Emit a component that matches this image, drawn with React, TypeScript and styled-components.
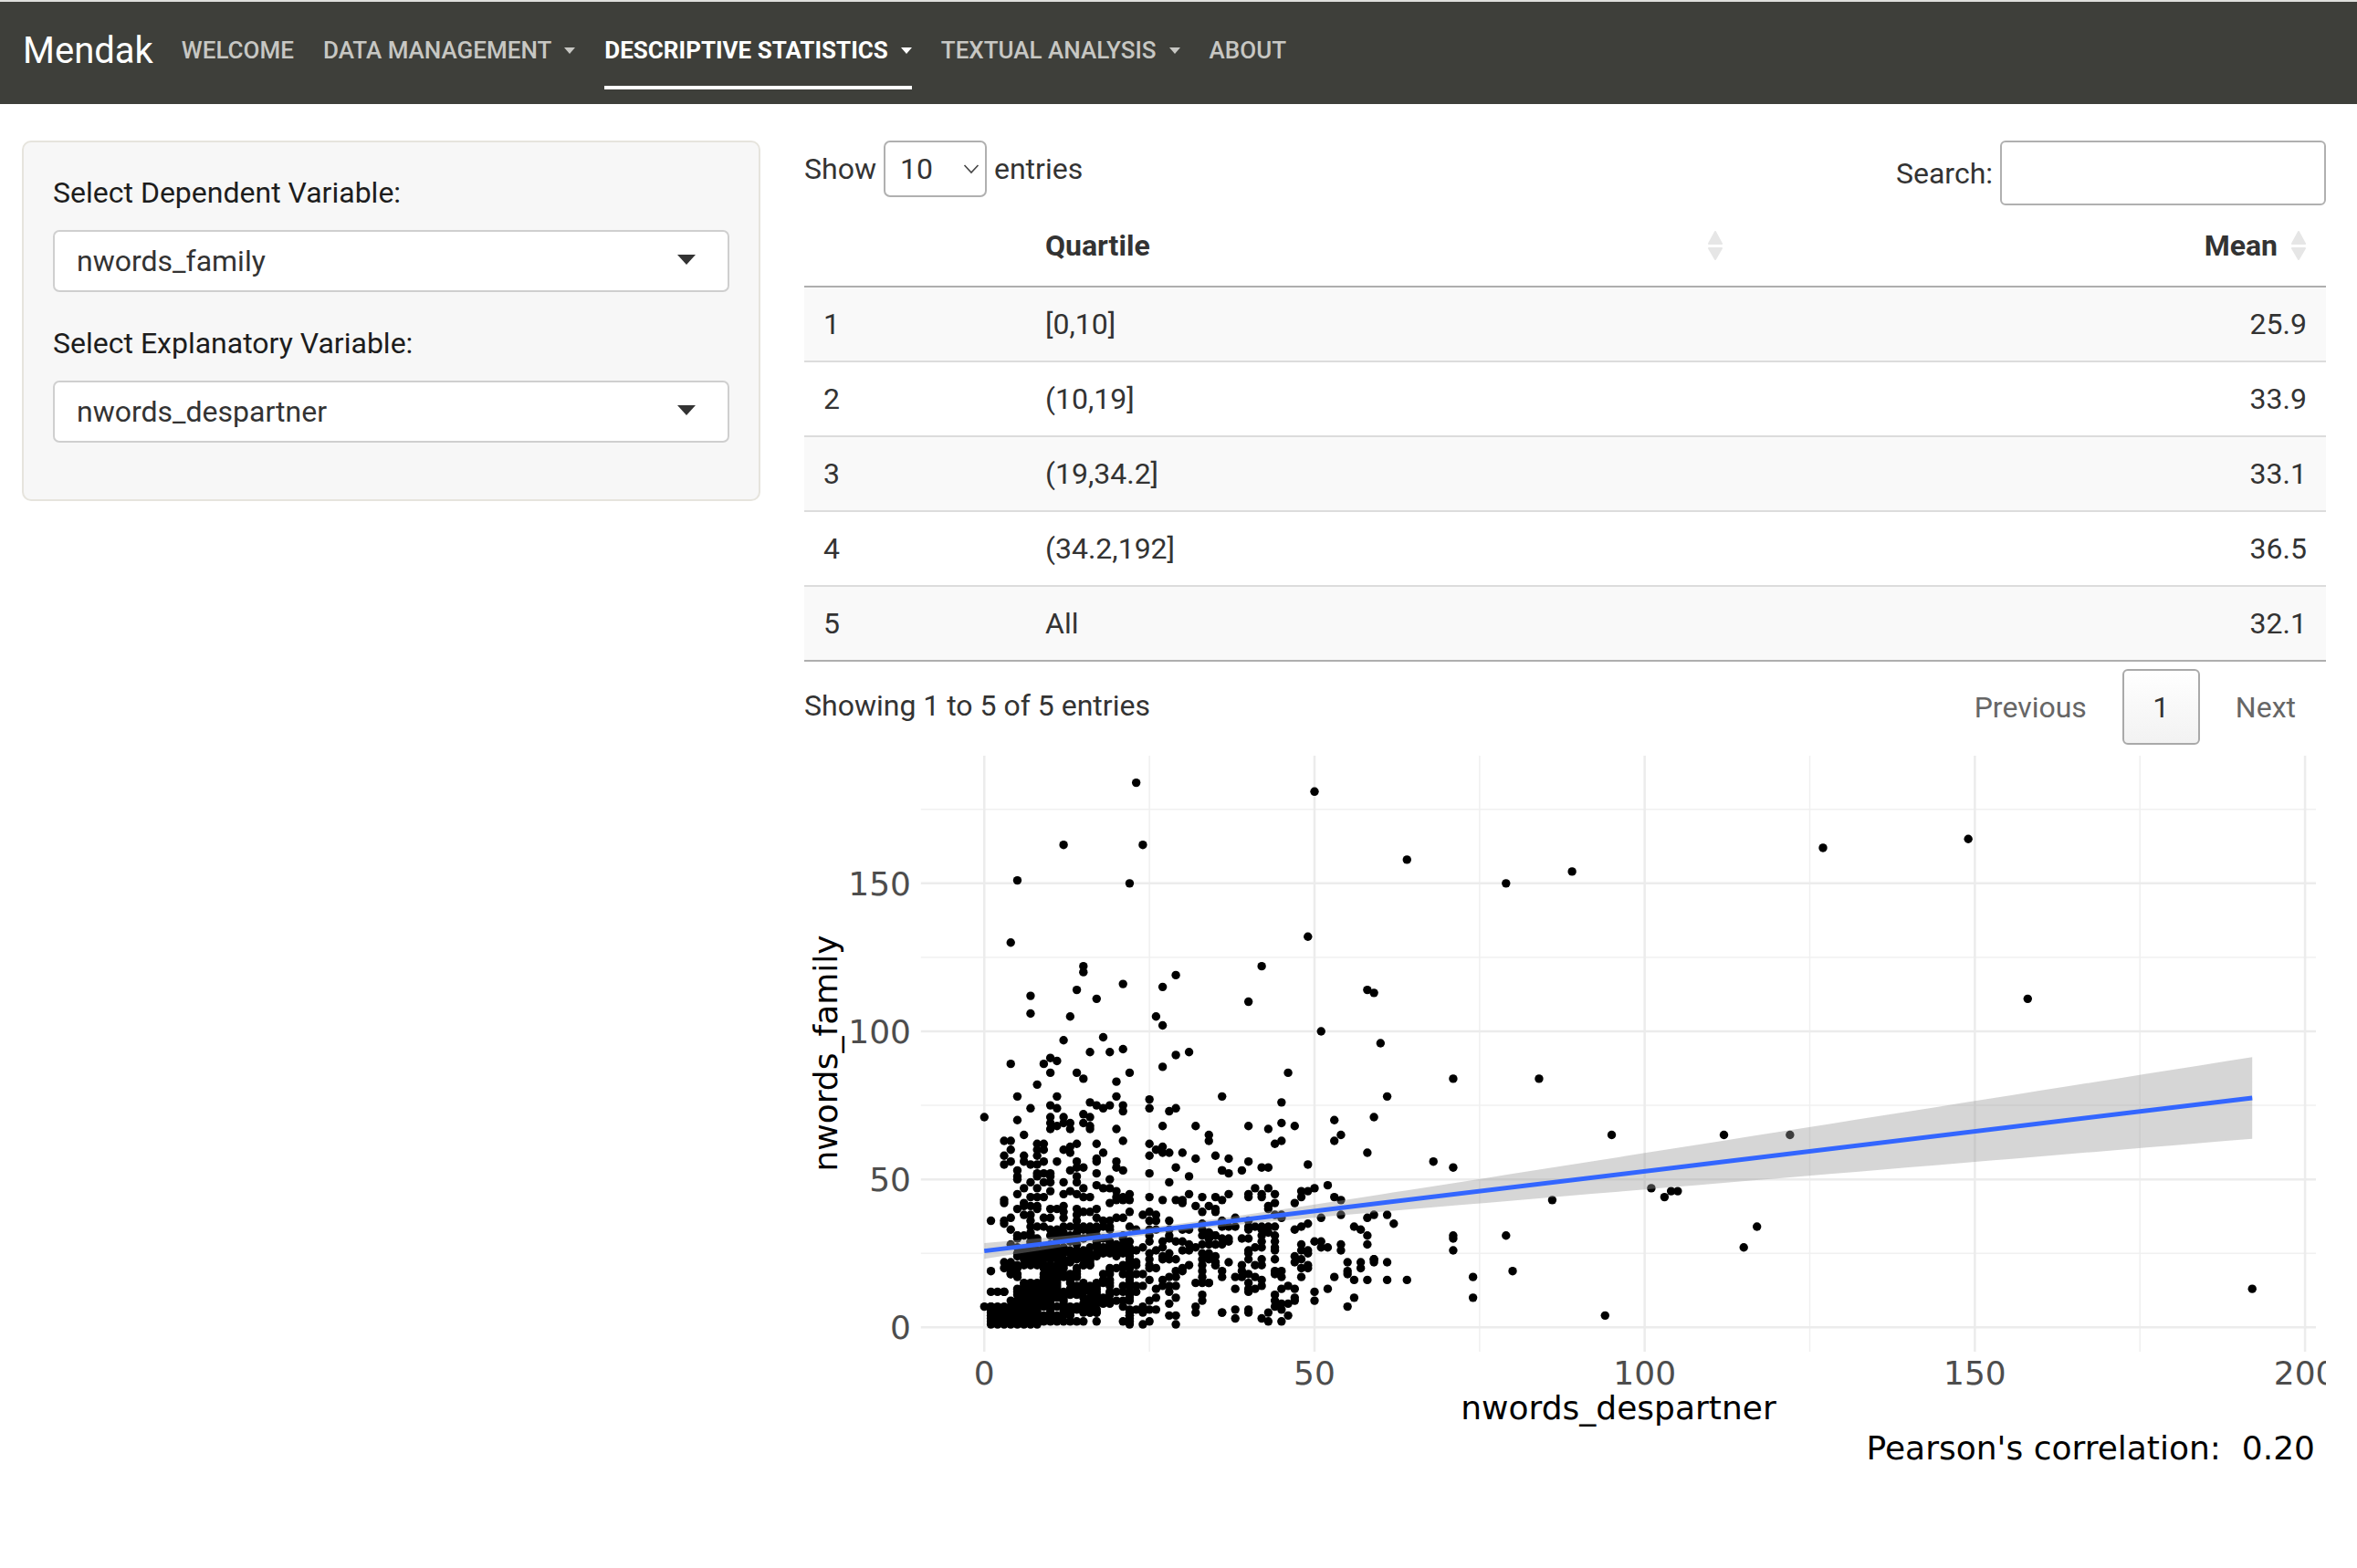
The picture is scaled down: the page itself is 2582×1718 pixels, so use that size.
import styled, { createGlobalStyle } from "styled-components";

const GlobalStyle = createGlobalStyle`
  html, body {
    margin: 0;
    padding: 0;
    background: #fff;
    font-family: Roboto, "Liberation Sans", sans-serif;
    color: #2b2b2b;
  }
  * {
    box-sizing: border-box;
  }
`;

const Navbar = styled.nav`
  display: flex;
  align-items: flex-start;
  height: 114px;
  border-top: 2px solid #dfdfdc;
  background: #3e3f3a;
  padding: 0 0 0 25px;
`;

const Brand = styled.div`
  font-size: 40px;
  line-height: 54px;
  color: #fff;
  margin-top: 27px;
  margin-right: 31px;
`;

const NavLinks = styled.div`
  display: flex;
  gap: 32px;
`;

const NavLink = styled.div<{ $active?: boolean }>`
  display: flex;
  align-items: center;
  height: 96px;
  padding-top: 14px;
  font-size: 26px;
  font-weight: ${(p) => (p.$active ? 700 : 500)};
  letter-spacing: 0;
  text-transform: uppercase;
  color: ${(p) => (p.$active ? "#fff" : "#c7c7c3")};
  border-bottom: 4px solid ${(p) => (p.$active ? "#fff" : "transparent")};
`;

const NavCaret = styled.span`
  width: 0;
  height: 0;
  margin-left: 14px;
  border-top: 7px solid currentColor;
  border-left: 6.5px solid transparent;
  border-right: 6.5px solid transparent;
`;

const Content = styled.div`
  display: grid;
  grid-template-columns: 809px 1667px;
  column-gap: 48px;
  padding: 40px 0 0 24px;
`;

const Well = styled.div`
  height: 395px;
  background: #f7f7f7;
  border: 2px solid #e6e4dd;
  border-radius: 10px;
  padding: 32px 32px 0;
`;

const FieldLabel = styled.div`
  font-size: 32px;
  line-height: 46px;
  color: #1d1d1d;
  margin-bottom: 18px;
`;

const Field = styled.div`
  margin-bottom: 33px;
`;

const SelectBox = styled.div`
  display: flex;
  align-items: center;
  justify-content: space-between;
  height: 68px;
  background: #fff;
  border: 2px solid #cfcfcf;
  border-radius: 7px;
  padding: 0 35px 0 24px;
  font-size: 32px;
  color: #333;
`;

const SelectCaret = styled.span`
  width: 0;
  height: 0;
  margin-top: -4px;
  border-top: 11px solid #333;
  border-left: 10px solid transparent;
  border-right: 10px solid transparent;
`;

const Main = styled.div`
  display: flex;
  flex-direction: column;
`;

const Controls = styled.div`
  display: flex;
  justify-content: space-between;
  align-items: flex-start;
  height: 71px;
  font-size: 32px;
  color: #333;
`;

const LengthControl = styled.div`
  display: flex;
  align-items: center;
  gap: 8px;
  height: 62px;
`;

const LengthSelect = styled.div`
  display: flex;
  align-items: center;
  justify-content: space-between;
  width: 113px;
  height: 62px;
  border: 2px solid #b0b0b0;
  border-radius: 7px;
  padding: 0 6px 0 16px;
`;

const SearchControl = styled.label`
  display: flex;
  align-items: center;
  gap: 8px;
`;

const SearchInput = styled.input`
  width: 357px;
  height: 71px;
  border: 2px solid #b0b0b0;
  border-radius: 6px;
  background: #fff;
  outline: none;
`;

const Table = styled.table`
  width: 100%;
  table-layout: fixed;
  border-collapse: separate;
  border-spacing: 0;
  font-size: 32px;
  color: #333;
`;

const HeadCell = styled.th<{ $right?: boolean }>`
  position: relative;
  height: 90px;
  padding: 0 ${(p) => (p.$right ? "53px" : "21px")} 0 21px;
  text-align: ${(p) => (p.$right ? "right" : "left")};
  font-weight: 700;
  border-bottom: 2px solid #aeaeae;
`;

const SortIcon = styled.svg<{ $right?: boolean }>`
  position: absolute;
  top: 27px;
  right: ${(p) => (p.$right ? "21px" : "12px")};
`;

const Row = styled.tr<{ $odd: boolean }>`
  background: ${(p) => (p.$odd ? "#f9f9f9" : "#fff")};
`;

const Cell = styled.td<{ $right?: boolean; $last?: boolean }>`
  height: 82px;
  padding: 0 21px;
  text-align: ${(p) => (p.$right ? "right" : "left")};
  border-bottom: 2px solid ${(p) => (p.$last ? "#aeaeae" : "#dcdcdc")};
`;

const Footer = styled.div`
  display: flex;
  justify-content: space-between;
  align-items: center;
  height: 83px;
  margin-top: 8px;
  font-size: 32px;
  color: #333;
`;

const Info = styled.span`
  padding-bottom: 3px;
`;

const Pager = styled.div`
  display: flex;
  align-items: center;
  padding-right: 33px;
  color: #666;
`;

const PageButton = styled.div`
  display: flex;
  align-items: center;
  justify-content: center;
  width: 85px;
  height: 83px;
  margin: 0 39px;
  background: linear-gradient(#fff, #f2f2f2);
  border: 2px solid #a9a9a9;
  border-radius: 6px;
  color: #333;
`;

const Plot = styled.svg`
  display: block;
  margin-top: 3px;
`;

const rows = [
  { q: "[0,10]", mean: "25.9" },
  { q: "(10,19]", mean: "33.9" },
  { q: "(19,34.2]", mean: "33.1" },
  { q: "(34.2,192]", mean: "36.5" },
  { q: "All", mean: "32.1" },
];

// points read off the plot, as [nwords_despartner, nwords_family]
const sparse: number[][] = [
  [23,184],[50,181],[12,163],[24,163],[64,158],[5,151],[22,150],[79,150],[89,154],[4,130],[49,132],[15,122],[15,120],[42,122],[29,119],[27,115],[21,116],[14,114],[7,112],[17,111],[40,110],[58,114],[59,113],[7,106],[13,105],[26,105],[27,102],[51,100],[12,97],[18,98],[60,96],[16,93],[19,93],[21,94],[31,93],[29,92],[4,89],[9,89],[10,91],[11,90],[27,88],[10,86],[14,86],[15,84],[22,86],[46,86],[20,83],[8,82],[71,84],[84,84],[5,78],[11,78],[20,78],[36,78],[61,78],[7,74],[10,75],[11,74],[16,76],[17,75],[18,74],[19,75],[21,75],[21,73],[25,77],[25,74],[28,73],[29,74],[45,76],[0,71],[5,70],
  [127,162],[149,165],[158,111],[95,65],[112,65],[122,65],[68,56],[71,54],[86,43],[101,47],[103,44],[104,46],[105,46],[62,35],[61,38],[59,38],[117,34],[115,27],[71,31],[71,30],[71,26],[79,31],[80,19],[74,17],[74,10],[94,4],[192,13],[64,16],[61,16],[61,22],[59,23],[59,22],
  [10,71],[12,71],[15,72],[16,71],[10,69],[10,67],[11,68],[12,69],[13,69],[13,67],[15,69],[16,68],[16,67],[20,67],[27,68],[32,68],[34,65],[34,63],[6,65],[3,63],[4,63],[8,62],[9,62],[8,60],[9,60],[14,62],[13,61],[12,60],[17,62],[21,63],[25,62],[27,61],[26,60],[27,59],[28,59],[30,59],[4,60],[3,58],[6,58],[8,58],[13,59],[18,59],[17,57],[25,58],[32,57],[35,58],[3,55],[4,56],[6,56],[7,55],[8,55],[9,56],[11,56],[14,56],[17,56],[20,56],[14,54],[15,54],[20,54],[21,53],[29,54],[13,53],[5,53],[5,51],[5,50],[8,52],[10,52],[9,52],[8,51],[10,51],[14,51],[17,52],[25,52],[31,51],[36,53],[14,49],[12,49],[7,49],[9,49],[10,49],[19,50],[28,49],[17,48],[18,47],[19,47],[6,47],[8,47],[10,46],[15,47],[20,46],[13,46],[5,45],[12,45],[14,45],[15,44],[16,44],[20,44],[21,44],[22,45],[22,43],[7,44],[8,44],[9,44],[25,44],[31,45],[33,44],[35,44],[27,43],[29,43],[30,43],[30,42],[3,43],[3,42],[6,42],[12,41],[19,42],[20,43],[21,43],[32,41],[34,41],[35,40],[5,40],[6,41],[7,41],[8,41],[8,40],[10,40],[11,40],[14,40],[15,39],[16,39],[17,40],[33,39],[6,38],[7,38],[12,39],[14,38],[22,39],[25,39],[24,38],[26,38],[1,36],[4,37],[3,36],[3,35],[7,36],[9,37],[10,37],[12,37],[14,36],[17,37],[18,36],[19,36],[20,37],[21,37],[25,36],[26,36],[28,36],[33,35],[4,33],[7,34],[8,34],[9,34],[10,33],[11,33],[12,34],[13,34],[14,34],[15,34],[16,34],[17,34],[18,34],[19,34],[7,32],[11,32],[12,32],[15,33],[17,33],[19,33],[5,31],[7,31],[10,31],[14,32],[16,32],[22,34],[23,33],[25,33],[26,33],[28,33],[30,33],[31,33],[33,33],[34,32],[35,31],[5,30],[25,31],[28,31],[33,31],[34,30],[36,30],
  [4,28],[7,27],[17,28],[19,28],[21,28],[22,29],[25,29],[27,29],[28,30],[29,29],[30,29],[31,28],[33,28],[34,28],[35,28],[22,27],[23,26],[24,27],[25,25],[26,26],[27,27],[30,26],[31,26],[32,27],[33,25],[34,25],[35,24],[14,26],[13,26],[11,26],[22,24],[17,25],[15,24],[16,23],[16,21],[15,21],[25,23],[25,21],[26,20],[25,20],[27,24],[27,23],[28,25],[28,23],[29,23],[33,23],[33,21],[33,19],[33,17],[33,15],[34,23],[35,22],[35,21],[32,15],[34,15],[31,21],[30,20],[29,19],[30,19],[29,17],[28,17],[27,16],[27,14],[26,13],[28,14],[29,14],[28,12],[29,10],[26,10],[25,9],[28,8],[25,16],[24,18],[23,18],[23,22],[23,21],[22,20],[24,14],[23,14],[22,14],[21,14],[21,12],[22,12],[23,12],[33,11],[33,9],[32,7],[32,5],[36,5],[28,4],[29,4],[29,1],[25,2],[24,1],[26,6],[25,6],[24,7],[24,5],[23,6],[22,4],[21,7],[21,2],[22,2],[17,2],[16,5],[15,2],[17,5],
  [53,70],[59,71],[40,68],[43,67],[45,69],[47,68],[54,65],[53,63],[45,63],[44,62],[58,59],[37,57],[40,56],[49,55],[42,54],[43,54],[39,53],[36,53],[37,52],[52,48],[41,47],[43,47],[50,47],[49,46],[48,46],[44,45],[37,45],[48,44],[36,43],[40,45],[40,44],[42,45],[42,44],[53,44],[54,43],[47,42],[44,42],[43,41],[43,40],[35,39],[38,37],[36,36],[40,36],[44,38],[45,38],[45,37],[51,37],[54,38],[58,37],[49,35],[48,34],[47,33],[56,34],[57,33],[58,31],[58,28],[54,28],[54,26],[50,29],[51,29],[51,27],[52,27],[48,28],[48,26],[49,26],[49,25],[47,24],[48,23],[47,22],[49,21],[49,20],[48,20],[48,17],[55,22],[57,22],[57,20],[59,23],[55,19],[55,18],[53,17],[56,16],[58,16],[52,13],[50,12],[50,9],[56,10],[55,7],
  [40,34],[41,34],[42,34],[43,34],[44,34],[40,33],[42,33],[37,34],[38,34],[36,34],[34,32],[35,31],[35,28],[34,30],[36,28],[37,30],[37,29],[39,30],[40,30],[42,31],[42,29],[43,32],[44,31],[44,29],[44,27],[44,26],[41,27],[40,26],[40,25],[40,23],[42,27],[37,22],[35,22],[35,21],[34,24],[36,19],[36,17],[39,21],[39,19],[38,17],[39,17],[40,18],[41,17],[42,16],[40,15],[42,14],[40,13],[41,13],[40,12],[38,13],[34,15],[41,21],[42,23],[42,21],[44,23],[44,19],[45,19],[44,18],[45,17],[46,14],[45,13],[47,13],[44,11],[47,10],[47,9],[44,9],[46,8],[44,7],[45,8],[45,6],[36,5],[38,6],[40,6],[40,5],[38,3],[42,3],[43,5],[43,2],[46,4],[45,2],
  [0,7],[1,7],[2,7],[1,19],[2,12],[3,12],[3,22],[3,20],[4,20],[4,18],[5,13],
];

// white gaps inside the packed block, as [x from, x to, y from, y to]
const gaps = [
  [1, 3, 8, 11], [1, 2, 13, 31], [3, 3, 13, 31], [1, 4, 23, 31], [3, 5, 13, 16],
  [6, 8, 16, 20], [15, 17, 16, 20], [18, 21, 1, 7], [13, 14, 8, 10], [20, 21, 13, 16],
  [17, 20, 21, 23], [9, 14, 1, 1], [15, 17, 1, 4],
];

// the packed block low on the left, too dense to read dot by dot
function packedBlock() {
  const out: number[][] = [];
  let seed = 41;
  for (let x = 1; x <= 22; x++) {
    for (let y = 1; y <= 31; y++) {
      seed = (seed * 1103515245 + 12345) & 0x7fffffff;
      const r = (seed >> 8) % 100;
      if (gaps.some(([a, b, c, d]) => x >= a && x <= b && y >= c && y <= d)) continue;
      const limit = y > 26 ? 42 : x > 17 ? 60 : 76;
      if (r < limit || (x < 9 && y < 6)) out.push([x, y]);
    }
  }
  return out;
}

const points = [...sparse, ...packedBlock()];

const X = (v: number) => 197.3 + 7.234 * v;
const Y = (v: number) => 635.3 - 3.243 * v;
const fit = (v: number) => 25.8 + ((77.5 - 25.8) / 192) * v;
const band = (v: number) => Math.sqrt(16 + Math.pow(0.2715 * (v - 28), 2));

function ribbonPath() {
  const xs: number[] = [];
  for (let v = 0; v <= 192; v += 4) xs.push(v);
  const up = xs.map((v) => `${X(v)},${Y(fit(v)) - band(v)}`);
  const down = xs.reverse().map((v) => `${X(v)},${Y(fit(v)) + band(v)}`);
  return `M${up.join("L")}L${down.join("L")}Z`;
}

function Sort({ right }: { right?: boolean }) {
  return (
    <SortIcon $right={right} width="18" height="34" viewBox="0 0 18 34">
      <path d="M9 2 L16 15 H2 Z" fill="#e6e6e6" stroke="#e6e6e6" strokeWidth="2" strokeLinejoin="round" />
      <path d="M9 32 L16 20 H2 Z" fill="#e6e6e6" stroke="#e6e6e6" strokeWidth="2" strokeLinejoin="round" />
    </SortIcon>
  );
}

function ScatterPlot() {
  const left = 127.8;
  const right = 1656;
  const top = 9;
  const bottom = 662;
  const tick = { fontFamily: "DejaVu Sans, sans-serif", fontSize: 36, fill: "#4d4d4d" };
  const title = { fontFamily: "DejaVu Sans, sans-serif", fontSize: 36, fill: "#000" };
  return (
    <Plot width="1667" height="820" viewBox="0 0 1667 820">
      {[25, 75, 125, 175].map((v) => (
        <line key={v} x1={left} x2={right} y1={Y(v)} y2={Y(v)} stroke="#f0f0f0" strokeWidth="1.5" />
      ))}
      {[25, 75, 125, 175].map((v) => (
        <line key={v} x1={X(v)} x2={X(v)} y1={top} y2={bottom} stroke="#f0f0f0" strokeWidth="1.5" />
      ))}
      {[0, 50, 100, 150].map((v) => (
        <line key={v} x1={left} x2={right} y1={Y(v)} y2={Y(v)} stroke="#ececec" strokeWidth="2.5" />
      ))}
      {[0, 50, 100, 150, 200].map((v) => (
        <line key={v} x1={X(v)} x2={X(v)} y1={top} y2={bottom} stroke="#ececec" strokeWidth="2.5" />
      ))}
      {points.map(([x, y], i) => (
        <circle key={i} cx={X(x)} cy={Y(y)} r="4.7" fill="#000" />
      ))}
      <path d={ribbonPath()} fill="#999" fillOpacity="0.4" />
      <line x1={X(0)} y1={Y(fit(0))} x2={X(192)} y2={Y(fit(192))} stroke="#3366ff" strokeWidth="5" />
      {[0, 50, 100, 150].map((v) => (
        <text key={v} x="117" y={Y(v) + 13} textAnchor="end" {...tick}>{v}</text>
      ))}
      {[0, 50, 100, 150, 200].map((v) => (
        <text key={v} x={X(v)} y="698" textAnchor="middle" {...tick}>{v}</text>
      ))}
      <text x="892" y="736" textAnchor="middle" {...title}>nwords_despartner</text>
      <text x="36" y="335" textAnchor="middle" transform="rotate(-90 36 335)" {...title}>nwords_family</text>
      <text x="1655" y="780" textAnchor="end" xmlSpace="preserve" {...title}>Pearson's correlation:  0.20</text>
    </Plot>
  );
}

export default function App() {
  return (
    <>
      <GlobalStyle />
      <Navbar>
        <Brand>Mendak</Brand>
        <NavLinks>
          <NavLink>Welcome</NavLink>
          <NavLink>Data Management<NavCaret /></NavLink>
          <NavLink $active>Descriptive Statistics<NavCaret /></NavLink>
          <NavLink>Textual Analysis<NavCaret /></NavLink>
          <NavLink>About</NavLink>
        </NavLinks>
      </Navbar>
      <Content>
        <Well>
          <Field>
            <FieldLabel>Select Dependent Variable:</FieldLabel>
            <SelectBox>nwords_family<SelectCaret /></SelectBox>
          </Field>
          <Field>
            <FieldLabel>Select Explanatory Variable:</FieldLabel>
            <SelectBox>nwords_despartner<SelectCaret /></SelectBox>
          </Field>
        </Well>
        <Main>
          <Controls>
            <LengthControl>
              Show
              <LengthSelect>
                10
                <svg width="18" height="12" viewBox="0 0 18 12">
                  <path d="M1.5 2 L9 10 L16.5 2" fill="none" stroke="#444" strokeWidth="1.6" />
                </svg>
              </LengthSelect>
              entries
            </LengthControl>
            <SearchControl>
              Search:
              <SearchInput type="text" />
            </SearchControl>
          </Controls>
          <Table>
            <colgroup>
              <col style={{ width: 243 }} />
              <col style={{ width: 776 }} />
              <col />
            </colgroup>
            <thead>
              <tr>
                <HeadCell />
                <HeadCell>Quartile<Sort /></HeadCell>
                <HeadCell $right>Mean<Sort right /></HeadCell>
              </tr>
            </thead>
            <tbody>
              {rows.map((row, i) => (
                <Row key={row.q} $odd={i % 2 === 0}>
                  <Cell $last={i === 4}>{i + 1}</Cell>
                  <Cell $last={i === 4}>{row.q}</Cell>
                  <Cell $right $last={i === 4}>{row.mean}</Cell>
                </Row>
              ))}
            </tbody>
          </Table>
          <Footer>
            <Info>Showing 1 to 5 of 5 entries</Info>
            <Pager>
              Previous
              <PageButton>1</PageButton>
              Next
            </Pager>
          </Footer>
          <ScatterPlot />
        </Main>
      </Content>
    </>
  );
}
